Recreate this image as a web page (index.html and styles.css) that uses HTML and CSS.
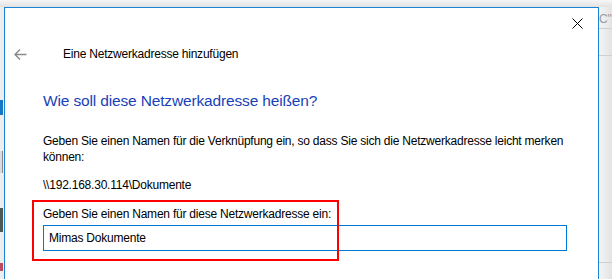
FILE: index.html
```html
<!DOCTYPE html>
<html lang="de">
<head>
    <meta charset="UTF-8">
    <title>Eine Netzwerkadresse hinzufügen</title>
    <link rel="stylesheet" href="styles.css">
</head>
<body>
    <div class="desk">
        <!-- Background window strips -->
        <div class="behind-left">
            <span class="blip blue"></span>
            <span class="blip doc"></span>
            <span class="blip film"></span>
            <span class="blip red"></span>
        </div>

        <!-- Wizard window -->
        <div class="wizard">
            <div class="titlebar">
                <button class="close" aria-label="Schließen">
                    <svg width="11" height="11" viewBox="0 0 11 11"><path d="M0.5 0.5 L10.5 10.5 M10.5 0.5 L0.5 10.5" stroke="#000" stroke-width="1" fill="none"/></svg>
                </button>
            </div>
            <div class="nav">
                <span class="back">
                    <svg width="13" height="11" viewBox="0 0 13 11"><path d="M6 0.5 L1 5.5 L6 10.5 M1 5.5 L12.5 5.5" stroke="#8a8a8a" stroke-width="1.4" fill="none"/></svg>
                </span>
                <span class="nav-title">Eine Netzwerkadresse hinzufügen</span>
            </div>
            <div class="content">
                <h1>Wie soll diese Netzwerkadresse heißen?</h1>
                <p class="intro">Geben Sie einen Namen für die Verknüpfung ein, so dass Sie sich die Netzwerkadresse leicht merken können:</p>
                <p class="path">\\192.168.30.114\Dokumente</p>
                <div class="field">
                    <label for="name">Geben Sie einen Namen für diese Netzwerkadresse ein:</label>
                    <input id="name" type="text" value="Mimas Dokumente">
                    <div class="mark"></div>
                </div>
            </div>
        </div>

        <div class="behind-right">
            <span class="quote">C"</span>
            <div class="rule r1"></div>
            <div class="rule r2"></div>
            <div class="rule r3"></div>
        </div>
    </div>
</body>
</html>
```

FILE: styles.css
```css
body {
    margin: 0;
    padding: 0;
    font-family: "Liberation Sans", Arial, sans-serif;
    letter-spacing: -0.22px;
    background-color: #f0f0f0;
    overflow: hidden;
}
.desk {
    display: flex;
    height: 279px;
    padding-top: 7px;
    box-sizing: border-box;
    background: linear-gradient(#f6f6f6 0, #e2e2e2 7px, #f0f0f0 8px);
}
/* left edge */
.behind-left {
    width: 4px;
    position: relative;
    background-color: #ededed;
}
.blip {
    position: absolute;
    left: 0;
    width: 3px;
}
.blip.blue { top: 93px; height: 15px; background-color: #1976c2; }
.blip.doc { top: 144px; height: 22px; background-color: #d6dbe3; border-right: 1px solid #8b8b8b; width: 2px; }
.blip.film { top: 201px; height: 24px; background-color: #4c5a52; }
.blip.red { top: 256px; height: 8px; background-color: #c14a5a; }

/* Window */
.wizard {
    width: 593px;
    border: 1px solid #1883d7;
    border-bottom: none;
    background-color: #ffffff;
    display: flex;
    flex-direction: column;
}
.titlebar {
    height: 31px;
    display: flex;
    justify-content: flex-end;
}
.close {
    width: 30px;
    height: 28px;
    border: none;
    background: none;
    padding: 10px 0 0 0;
    margin-right: 6px;
    display: flex;
    justify-content: center;
    align-items: flex-start;
}
.nav {
    display: flex;
    align-items: center;
    height: 30px;
    padding-left: 9px;
}
.back {
    width: 13px;
    height: 11px;
    display: flex;
}
.nav-title {
    margin-left: 36px;
    font-size: 12px;
    color: #000;
}
.content {
    padding: 23px 0 0 38px;
}
h1 {
    margin: 0;
    font-size: 15.5px;
    font-weight: normal;
    letter-spacing: -0.15px;
    color: #1a3fb8;
}
.intro {
    margin: 23px 0 0 0;
    width: 526px;
    font-size: 12px;
    line-height: 16px;
    color: #000;
}
.path {
    margin: 13px 0 0 0;
    font-size: 12px;
    color: #000;
}
.field {
    position: relative;
    margin-top: 15px;
    display: flex;
    flex-direction: column;
}
label {
    font-size: 12px;
    color: #000;
    margin-bottom: 4px;
}
input {
    width: 524px;
    height: 26px;
    box-sizing: border-box;
    border: 1px solid #0078d7;
    padding: 0 5px;
    font-family: inherit;
    letter-spacing: inherit;
    font-size: 12px;
    color: #000;
    outline: none;
}
.mark {
    position: absolute;
    left: -11px;
    top: -7px;
    width: 303px;
    height: 57px;
    border: 2px solid #ff0000;
    pointer-events: none;
}

/* right edge */
.behind-right {
    flex: 1;
    position: relative;
    background: linear-gradient(90deg, #f4f4f4, #e3e3e3);
}
.quote {
    position: absolute;
    left: 0;
    top: 5px;
    font-size: 12px;
    color: #9a9a9a;
}
.rule {
    position: absolute;
    left: 0;
    right: 0;
    height: 1px;
    background-color: #cfcfcf;
}
.r1 { top: 21px; }
.r2 { top: 48px; }
.r3 { top: 255px; }
```
